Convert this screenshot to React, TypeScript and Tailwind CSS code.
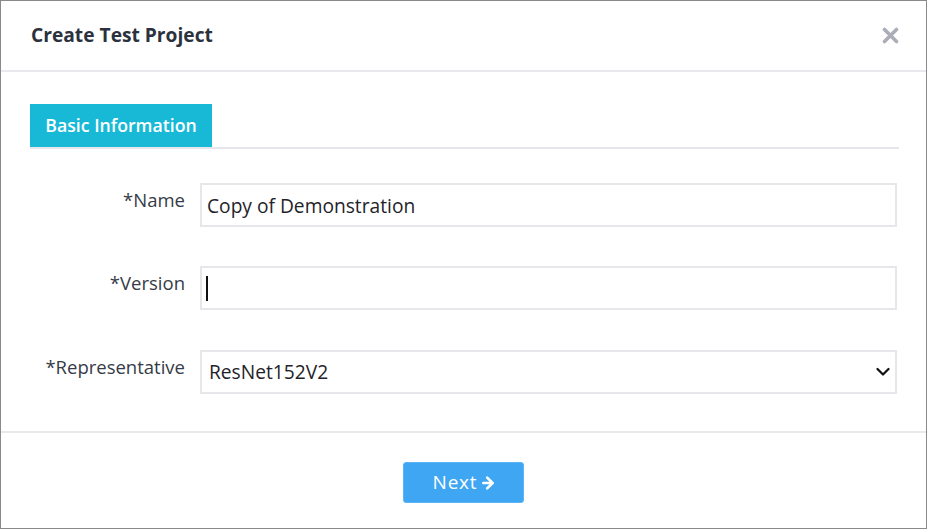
import { useState } from "react";

const font = { fontFamily: '"Open Sans", "Noto Sans", sans-serif' };

function CloseIcon() {
  return (
    <svg width="17" height="17" viewBox="0 0 17 17" className="text-[#abaeb8]">
      <path d="M2.5 2.5 L14.5 14.5 M14.5 2.5 L2.5 14.5" stroke="currentColor" strokeWidth="3.6" strokeLinecap="round" />
    </svg>
  );
}

function Row({ label, children, className = "" }: { label: string; children: React.ReactNode; className?: string }) {
  return (
    <div className={`flex items-start ${className}`}>
      <label className="w-[155px] shrink-0 text-right text-[18.5px] leading-[24px] pt-[5px] text-[#353b47] whitespace-nowrap">
        {label}
      </label>
      <div className="ml-[15px] flex-1">{children}</div>
    </div>
  );
}

export default function App() {
  const [name, setName] = useState("Copy of Demonstration");
  const [version, setVersion] = useState("");
  const [rep, setRep] = useState("ResNet152V2");

  return (
    <div style={font} className="w-[927px] h-[529px] border border-[#8a8a8a] bg-white flex flex-col overflow-hidden">
      {/* Header */}
      <div className="h-[71px] shrink-0 flex items-center justify-between pl-[30px] pr-[27px] border-b-2 border-[#e8e8ed]">
        <h1 className="text-[19.2px] font-bold text-[#2b323d]">Create Test Project</h1>
        <button className="p-0">
          <CloseIcon />
        </button>
      </div>

      {/* Body */}
      <div className="flex-1 pt-[32px] pl-[29px] pr-[27px]">
        <div className="flex border-b-2 border-[#e6e6eb]">
          <div className="h-[43px] w-[182px] bg-[#17b9d7] text-white text-[17.7px] font-semibold flex items-center justify-center">
            Basic Information
          </div>
        </div>

        <Row label="*Name" className="mt-[34px]">
          <input
            value={name}
            onChange={(e) => setName(e.target.value)}
            className="w-[697px] h-[44px] border-2 border-[#e6e6eb] px-[5px] text-[19.2px] text-[#1f2329] outline-none"
          />
        </Row>

        <Row label="*Version" className="mt-[39px]">
          <div className="w-[697px] h-[44px] border-2 border-[#e6e6eb] flex items-center px-[4px]">
            <div className="w-[2px] h-[25px] bg-[#111]" />
            <input
              value={version}
              onChange={(e) => setVersion(e.target.value)}
              className="flex-1 h-full text-[19.2px] outline-none"
            />
          </div>
        </Row>

        <Row label="*Representative" className="mt-[40px]">
          <div className="relative w-[697px] h-[44px]">
            <select
              value={rep}
              onChange={(e) => setRep(e.target.value)}
              className="appearance-none w-full h-full border-2 border-[#e6e6eb] pl-[7px] text-[19.2px] text-[#1f2329] bg-white outline-none"
            >
              <option>ResNet152V2</option>
            </select>
            <svg
              width="14"
              height="10"
              viewBox="0 0 14 10"
              className="absolute right-[7px] top-[17px] pointer-events-none"
            >
              <path d="M1.5 2 L7 7.5 L12.5 2" stroke="#111" strokeWidth="2.2" fill="none" strokeLinecap="round" strokeLinejoin="round" />
            </svg>
          </div>
        </Row>
      </div>

      {/* Footer */}
      <div className="h-[97px] shrink-0 border-t-2 border-[#e8e8ed] flex justify-center pt-[29px]">
        <button className="w-[121px] h-[41px] rounded-[3px] bg-[#3fa6f3] border border-[#5cb3f5] text-white text-[19px] tracking-[0.8px] flex items-center justify-center gap-[5px]">
          Next
          <svg width="12" height="14" viewBox="0 0 12 14">
            <path d="M1.3 7 H10.5 M5.2 1.6 L10.6 7 L5.2 12.4" stroke="white" strokeWidth="2.6" fill="none" strokeLinecap="round" strokeLinejoin="round" />
          </svg>
        </button>
      </div>
    </div>
  );
}
